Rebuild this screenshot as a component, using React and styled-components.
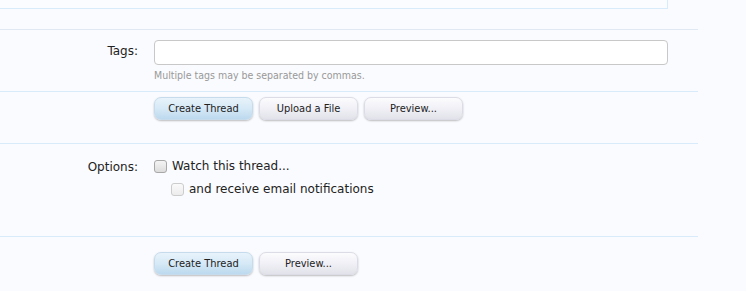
import React from 'react'
import styled, { createGlobalStyle, css } from 'styled-components'

const GlobalStyle = createGlobalStyle`
    html, body {
        margin: 0;
        padding: 0;
        background: #fafbfe;
    }
    body {
        font-family: "DejaVu Sans", "Liberation Sans", sans-serif;
        color: #222;
    }
`

const Page = styled.div`
    width: 746px;
    height: 291px;
    overflow: hidden;
    background: #fafbfe;
`
const Form = styled.div`
    width: 698px;
`
const TopBox = styled.div`
    width: 667px;
    height: 8px;
    border-right: 1px solid #d7ebfa;
    border-bottom: 1px solid #d7ebfa;
    background: #fbfcff;
`
const Section = styled.div`
    border-top: 1px solid ${props => props.line || '#d7ebfa'};
    margin-top: ${props => props.gap || 0}px;
    padding: ${props => props.pad || '0'};
    height: ${props => props.h}px;
    box-sizing: border-box;
`
const Row = styled.div`
    display: flex;
    align-items: flex-start;
`
const Label = styled.div`
    width: 138px;
    text-align: right;
    font-size: 12px;
    line-height: 16px;
    padding-top: ${props => props.top || 0}px;
    color: #222;
    flex-shrink: 0;
`
const Field = styled.div`
    margin-left: 16px;
    flex: 1;
    display: flex;
    flex-direction: column;
`
const TextInput = styled.input`
    width: 514px;
    height: 25px;
    box-sizing: border-box;
    border: 1px solid #c8c8c8;
    border-radius: 4px;
    background: #fff;
    outline: none;
`
const Hint = styled.div`
    font-family: "DejaVu Sans Condensed", "DejaVu Sans", sans-serif;
    font-size: 10.5px;
    color: #999;
    margin-top: 3px;
    line-height: 14px;
`
const Buttons = styled.div`
    display: flex;
    gap: 6px;
    margin-left: 154px;
`
const baseButton = css`
    width: 99px;
    height: 23px;
    box-sizing: border-box;
    border-radius: 7px;
    font-family: "DejaVu Sans Condensed", "DejaVu Sans", sans-serif;
    font-size: 11px;
    color: #222;
    padding: 0;
    box-shadow: 0 1px 2px rgba(0, 0, 0, 0.25);
`
const Button = styled.button`
    ${baseButton};
    border: 1px solid ${props => props.primary ? '#c6dcec' : '#dcdce6'};
    background: ${props => props.primary
        ? 'linear-gradient(to bottom, #e8f3fb 0%, #d6e9f6 50%, #bcd9ee 100%)'
        : 'linear-gradient(to bottom, #fcfcfe 0%, #f0f0f6 50%, #e2e2ea 100%)'};
`
const CheckLine = styled.label`
    display: flex;
    align-items: center;
    gap: 5px;
    margin-left: ${props => props.indent || 0}px;
    margin-top: ${props => props.mt || 0}px;
    font-size: 12px;
    line-height: 16px;
    color: #222;
`
const Box = styled.span`
    width: 11px;
    height: 11px;
    border: 1px solid ${props => props.faded ? '#ccc' : '#a8a8a8'};
    border-radius: 3px;
    background: ${props => props.faded
        ? 'linear-gradient(to bottom, #fafafa, #ececec)'
        : 'linear-gradient(to bottom, #f4f4f4, #dcdcdc)'};
    flex-shrink: 0;
`

export default function App() {
    return (<Page>
        <GlobalStyle />
        <Form>
            <TopBox />
            <Section line='#dfe8f3' gap={20} pad='10px 0 0' h={62}>
                <Row>
                    <Label top={3}>Tags:</Label>
                    <Field>
                        <TextInput type='text' />
                        <Hint>Multiple tags may be separated by commas.</Hint>
                    </Field>
                </Row>
            </Section>
            <Section pad='5px 0 0' h={52}>
                <Buttons>
                    <Button primary>Create Thread</Button>
                    <Button>Upload a File</Button>
                    <Button>Preview...</Button>
                </Buttons>
            </Section>
            <Section pad='14px 0 0' h={93}>
                <Row>
                    <Label top={1}>Options:</Label>
                    <Field>
                        <CheckLine>
                            <Box />
                            Watch this thread...
                        </CheckLine>
                        <CheckLine indent={17} mt={7}>
                            <Box faded />
                            and receive email notifications
                        </CheckLine>
                    </Field>
                </Row>
            </Section>
            <Section pad='15px 0 0' h={55}>
                <Buttons>
                    <Button primary>Create Thread</Button>
                    <Button>Preview...</Button>
                </Buttons>
            </Section>
        </Form>
    </Page>)
}
